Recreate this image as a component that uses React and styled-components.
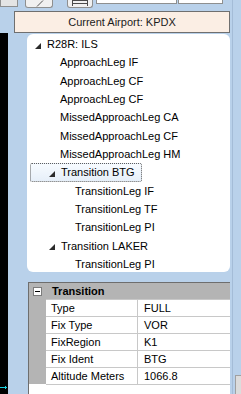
import React from 'react';
import styled, { createGlobalStyle } from 'styled-components';

const GlobalStyle = createGlobalStyle`
  html, body {
    margin: 0;
    padding: 0;
  }
  body {
    background: #b9d1ea;
    font-family: "Liberation Sans", Arial, sans-serif;
    font-size: 11px;
    color: #000;
    overflow: hidden;
  }
`;

const Page = styled.div`
  display: flex;
  width: 241px;
  height: 394px;
  overflow: hidden;
`;

const Main = styled.div`
  width: 232px;
  display: flex;
  flex-direction: column;
`;

const RightEdge = styled.div`
  flex: 1;
  border-left: 1px solid #a4bcd7;
  display: flex;
  flex-direction: column;
  justify-content: flex-end;
`;

const GrayCorner = styled.div`
  height: 18px;
  margin-left: 2px;
  background: #dcdcdc;
  border-left: 1px solid #a0a0a0;
  border-top: 1px solid #a0a0a0;
`;

const Toolbar = styled.div`
  height: 8px;
  flex-shrink: 0;
  display: flex;
  align-items: flex-start;
  overflow: hidden;
`;

const ToolButton = styled.div`
  box-sizing: border-box;
  width: ${p => p.$w}px;
  height: ${p => p.$h}px;
  margin-left: ${p => p.$ml || 0}px;
  background: ${p => p.$bg || '#f0f0f0'};
  border: 1px solid #8e8f8f;
  border-top: none;
  border-radius: ${p => (p.$flat ? '0' : '0 0 3px 3px')};
  display: flex;
  justify-content: center;
  align-items: flex-end;
`;

const AirportLabel = styled.div`
  flex-shrink: 0;
  box-sizing: border-box;
  height: 22px;
  margin: 3px 2px 0 14px;
  border: 1px solid #6f6f6f;
  background: #fbeee4;
  display: flex;
  align-items: center;
  justify-content: center;
  font-size: 11px;
  color: #1b1b1b;
`;

const Body = styled.div`
  flex: 1;
  display: flex;
  min-height: 0;
`;

const BlackStrip = styled.div`
  width: 8px;
  background: #000;
  display: flex;
  flex-direction: column;
  justify-content: flex-end;
  padding-bottom: 4px;
  box-sizing: border-box;
`;

const Content = styled.div`
  margin-left: 19px;
  width: 203px;
  display: flex;
  flex-direction: column;
`;

const TreePanel = styled.div`
  box-sizing: border-box;
  margin-top: 1px;
  height: 238px;
  padding-top: 1px;
  background: #fff;
  border-radius: 6px;
`;

const TreeRow = styled.div`
  box-sizing: border-box;
  height: 18.33px;
  display: flex;
  align-items: center;
  white-space: nowrap;
  padding-left: ${p => p.$pad}px;
  ${p =>
    p.$selected &&
    `
    margin-left: 3px;
    width: 112px;
    border: 1px dotted #5e5e5e;
    border-radius: 2px;
    background: linear-gradient(#f7fbff, #e6eff9);
  `}
`;

const Expander = styled.span`
  width: 12px;
  flex-shrink: 0;
  display: flex;
  align-items: center;
  padding-top: 3px;
`;

const Grid = styled.div`
  flex: 1;
  margin-top: 10px;
  margin-left: 1px;
  background: #fff;
  border: 1px solid #6e6e6e;
  border-bottom: none;
  border-right: none;
`;

const CategoryRow = styled.div`
  height: 16px;
  display: flex;
  align-items: center;
  background: #b4b4b4;
`;

const MarginCell = styled.div`
  width: 17px;
  flex-shrink: 0;
  align-self: stretch;
  background: #b4b4b4;
  display: flex;
  align-items: center;
  justify-content: center;
`;

const MinusBox = styled.div`
  box-sizing: border-box;
  width: 9px;
  height: 9px;
  border: 1px solid #7c7c7c;
  background: #fff;
  display: flex;
  align-items: center;
  justify-content: center;

  &::after {
    content: '';
    width: 5px;
    height: 1px;
    background: #000;
  }
`;

const CategoryTitle = styled.div`
  padding-left: 6px;
  font-weight: bold;
  color: #000;
`;

const PropRow = styled.div`
  height: 17px;
  display: flex;
`;

const Cell = styled.div`
  box-sizing: border-box;
  border-top: 1px solid #c8c8c8;
  display: flex;
  align-items: center;
  white-space: nowrap;
  ${p =>
    p.$name
      ? `
    width: 92px;
    padding-left: 5px;
    border-right: 1px solid #c8c8c8;
  `
      : `
    flex: 1;
    padding-left: 6px;
  `}
`;

const GridEnd = styled.div`
  margin-left: 17px;
  border-top: 1px solid #c8c8c8;
`;

const Triangle = () => (
  <svg width="6" height="6" viewBox="0 0 6 6">
    <polygon points="6,0 6,6 0,6" fill="#2b2b2b" />
  </svg>
);

const tree = [
  { text: 'R28R: ILS', level: 0, open: true },
  { text: 'ApproachLeg IF', level: 1 },
  { text: 'ApproachLeg CF', level: 1 },
  { text: 'ApproachLeg CF', level: 1 },
  { text: 'MissedApproachLeg CA', level: 1 },
  { text: 'MissedApproachLeg CF', level: 1 },
  { text: 'MissedApproachLeg HM', level: 1 },
  { text: 'Transition BTG', level: 1, open: true, selected: true },
  { text: 'TransitionLeg IF', level: 2 },
  { text: 'TransitionLeg TF', level: 2 },
  { text: 'TransitionLeg PI', level: 2 },
  { text: 'Transition LAKER', level: 1, open: true },
  { text: 'TransitionLeg PI', level: 2 },
];

const props = [
  ['Type', 'FULL'],
  ['Fix Type', 'VOR'],
  ['FixRegion', 'K1'],
  ['Fix Ident', 'BTG'],
  ['Altitude Meters', '1066.8'],
];

const nodePad = [8, 22];
const leafPad = [20, 33, 48];

export default function App() {
  return (
    <>
      <GlobalStyle />
      <Page>
        <Main>
          <Toolbar>
            <ToolButton $w={18} $h={7} $bg="#e4e4e4" $flat />
            <ToolButton $w={28} $h={8} $ml={7}>
              <svg width="12" height="8" viewBox="0 0 12 8">
                <line x1="4" y1="7.5" x2="10" y2="1.5" stroke="#555" strokeWidth="1" />
              </svg>
            </ToolButton>
            <ToolButton $w={26} $h={8} $ml={14}>
              <svg width="20" height="7" viewBox="0 0 20 7">
                <path d="M2 0.5 H18 M2.5 0 V6 M17.5 0 V6 M2 3.5 H18" stroke="#4a4a4a" strokeWidth="1" fill="none" />
              </svg>
            </ToolButton>
            <ToolButton $w={81} $h={4} $ml={3} $bg="#fff" $flat />
            <ToolButton $w={45} $h={4} $ml={1} $bg="#fff" $flat />
          </Toolbar>
          <AirportLabel>Current Airport: KPDX</AirportLabel>
          <Body>
            <BlackStrip>
              <svg width="8" height="5" viewBox="0 0 8 5">
                <path d="M0 2.5 H7 M5.5 1 V4" stroke="#18d0e0" strokeWidth="1" fill="none" />
              </svg>
            </BlackStrip>
            <Content>
              <TreePanel>
                {tree.map((item, i) => {
                  let pad = item.open ? nodePad[item.level] : leafPad[item.level];
                  if (item.selected) pad -= 4;
                  return (
                    <TreeRow key={i} $pad={pad} $selected={item.selected}>
                      {item.open && (
                        <Expander>
                          <Triangle />
                        </Expander>
                      )}
                      {item.text}
                    </TreeRow>
                  );
                })}
              </TreePanel>
              <Grid>
                <CategoryRow>
                  <MarginCell>
                    <MinusBox />
                  </MarginCell>
                  <CategoryTitle>Transition</CategoryTitle>
                </CategoryRow>
                {props.map(([name, value]) => (
                  <PropRow key={name}>
                    <MarginCell />
                    <Cell $name>{name}</Cell>
                    <Cell>{value}</Cell>
                  </PropRow>
                ))}
                <GridEnd />
              </Grid>
            </Content>
          </Body>
        </Main>
        <RightEdge>
          <GrayCorner />
        </RightEdge>
      </Page>
    </>
  );
}
